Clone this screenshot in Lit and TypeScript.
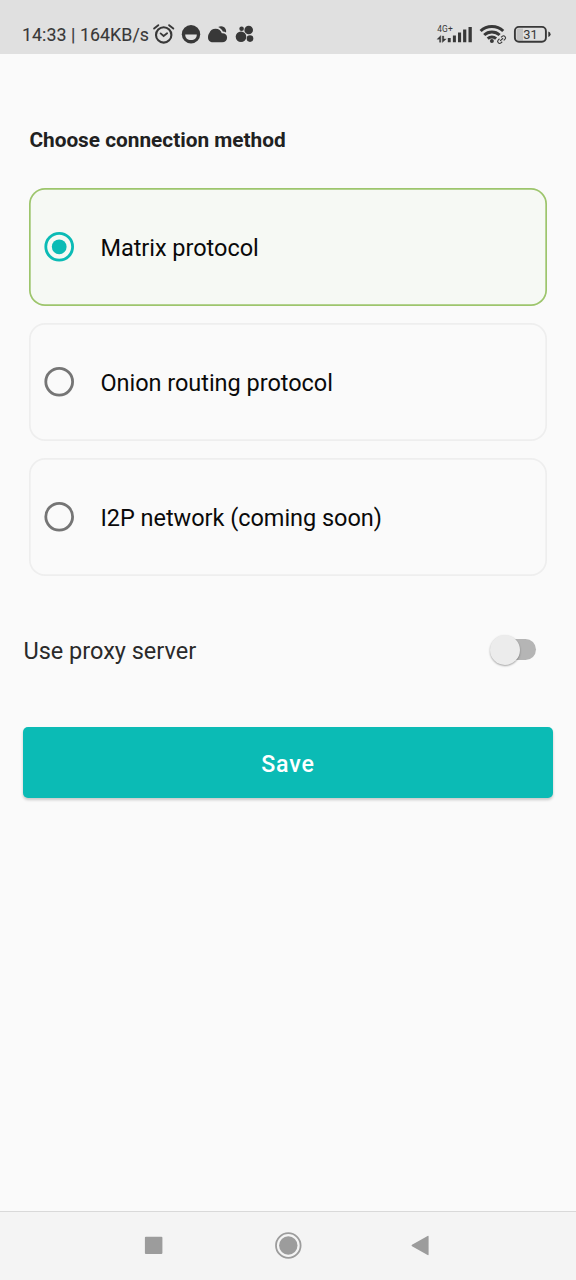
import { LitElement, html, css, svg } from "lit";
import { customElement, property, state } from "lit/decorators.js";
import { classMap } from "lit/directives/class-map.js";

@customElement("status-bar")
class StatusBar extends LitElement {
  static styles = css`
    :host { display: flex; box-sizing: border-box; height: 54px; padding: 15px 24px 0 22px; background: #e0e0e0; color: #383838; align-items: flex-start; }
    .time { font-size: 17.8px; line-height: 40px; letter-spacing: 0.06px; width: 128px; white-space: nowrap; font-weight: 400; -webkit-text-stroke: 0.1px #383838; }
    svg { display: block; flex: none; fill: #383838; }
    .spacer { flex: 1; }
    .small { font: 8.4px Roboto, sans-serif; letter-spacing: 0.1px; }
    .level { font: 400 12.8px Roboto, sans-serif; letter-spacing: 0; }
  `;
  render() {
    return html`
      <span class="time">14:33 | 164KB/s</span>
      <svg width="110" height="39" viewBox="150 15 110 39">
        <g fill="none" stroke="#383838" stroke-width="2.1" stroke-linecap="round">
          <circle cx="163.7" cy="34.9" r="7.7"></circle>
          <path d="M154.1 28.6l4.2-3.4M173.3 28.6l-4.2-3.4" stroke-width="1.9"></path>
          <path d="M160.6 33.4l3 2.6 3.5-2.7" stroke-width="1.8"></path>
        </g>
        <circle cx="191" cy="34.2" r="9.2"></circle>
        <path d="M185.2 34.4h11.6c0 3.6-2.3 5.6-5.8 5.6s-5.800-2-5.800-5.600z" fill="#e0e0e0"></path>
        <path d="M213 42.2c-3 0-5-2-5-4.800 0-2 .6-3.500 1.500-4.700 1-2.500 3-4 6-4 3.500 0 5.500 1.800 6.300 4.500 3.200-.3 5.300 1.400 5.300 4.200 0 3-2 4.800-5 4.800z"></path>
        <path d="M218.200 27c2.900-1.500 6.200-.6 7.400 1.900 .6 1.200 .6 2.400 .4 3.500-1-.7-2-.9-3.200-.9-.8-2-2.500-3.500-4.600-4.500z"></path>
        <circle cx="241" cy="36.700" r="5.300"></circle>
        <circle cx="248.700" cy="30" r="4.300"></circle>
        <circle cx="241.600" cy="28.800" r="2.300"></circle>
        <circle cx="250" cy="38.600" r="3.300"></circle>
      </svg>
      <span class="spacer"></span>
      <svg width="116" height="39" viewBox="436 15 116 39">
        <text class="small" x="437.300" y="31.700">4G+</text>
        <path d="M439.500 42.300v-3h-2.500l3.800-3.900v6.900zM442.300 36v6.600l4-3.700h-2.500v-2.900z" stroke="#383838" stroke-width=".3"></path>
        <path d="M447.800 38h2.900v4.300h-2.900zM452.900 35.500h3v6.800h-3zM458 32.500h3.100v9.800H458zM463.100 29.500h3.200v12.800h-3.200zM468.500 27h3.300v15.300h-3.300z"></path>
        <g fill="none" stroke="#383838" stroke-width="3">
          <path d="M480.600 31c6.200-6 16.400-6 22.600 0M484.200 35c4.300-4 11.100-4 15.400 0"></path>
          <path d="M487.700 38.700c2.500-2.200 5.900-2.200 8.400 0"></path>
        </g>
        <circle cx="491.900" cy="41" r="2"></circle>
        <rect x="-5.200" y="-3" width="10.400" height="6" rx="3" fill="#e0e0e0" transform="translate(501.600 39.600) rotate(-42)"></rect>
        <g fill="none" stroke="#383838" stroke-width="1.100" transform="translate(501.600 39.600) rotate(-42)">
          <path d="M1 -2H2.600a2 2 0 0 1 0 4H1M-1 2H-2.600a2 2 0 0 1 0-4H-1M-2 0H2"></path>
        </g>
        <path d="M518 28.500h5v12h-5q-1.500 0-1.500-2v-8q0-2 1.500-2z" fill="#c3c3c3"></path>
        <rect x="514.900" y="26.900" width="31" height="14.800" rx="4" fill="none" stroke="#383838" stroke-width="1.900"></rect>
        <path d="M548.300 31.500q2.300.7 2.300 2.800t-2.300 2.800z"></path>
        <text class="level" x="523.200" y="38.900">31</text>
      </svg>
    `;
  }
}

@customElement("method-option")
class MethodOption extends LitElement {
  @property() label = "";
  @property({ type: Boolean }) checked = false;
  static styles = css`
    :host { display: block; }
    .card { display: flex; align-items: center; box-sizing: border-box; height: 117.5px; padding-left: 14.5px; gap: 25.5px; border-radius: 16px; box-shadow: inset 0 0 0 1.7px #eeeeee; cursor: pointer; }
    .checked { background: #f6f9f4; box-shadow: inset 0 0 0 1.7px #9dc56c; }
    .radio { display: block; fill: none; stroke: #757575; stroke-width: 2.8; }
    .checked .radio { stroke: #0bbbb5; }
    .dot { fill: #0bbbb5; stroke: none; }
    .label { font-size: 23.5px; line-height: 30px; color: #0a0a0a; letter-spacing: -0.03px; padding-top: 2px; white-space: nowrap; }
  `;
  render() {
    return html`
      <div class=${classMap({ card: true, checked: this.checked })}>
        <svg class="radio" width="31" height="31" viewBox="0 0 31 31">
          <circle cx="15.2" cy="15.8" r="13.4"></circle>
          ${this.checked ? svg`<circle class="dot" cx="15.2" cy="15.8" r="7.4"></circle>` : null}
        </svg>
        <span class="label">${this.label}</span>
      </div>
    `;
  }
}

@customElement("nav-bar")
class NavBar extends LitElement {
  static styles = css`
    :host { display: flex; box-sizing: border-box; height: 69px; border-top: 1px solid #d9d9d9; background: #f4f4f4; justify-content: center; }
    svg { display: block; }
  `;
  render() {
    return html`
      <svg width="576" height="68" viewBox="0 1212 576 68" fill="#9c9c9c">
        <rect x="144.9" y="1236.7" width="17.5" height="17.3" rx="1"></rect>
        <circle cx="288.3" cy="1245.5" r="9.2"></circle>
        <circle cx="288.3" cy="1245.5" r="12.3" fill="none" stroke="#9c9c9c" stroke-width="1.8"></circle>
        <path d="M412 1244.700L427.600 1236q1-.5 1 .6v17.800q0 1.100-1 .6L412 1246.300q-1-.8 0-1.600z"></path>
      </svg>
    `;
  }
}

@customElement("app-root")
class AppRoot extends LitElement {
  @state() private selected = 0;
  private methods = ["Matrix protocol", "Onion routing protocol", "I2P network (coming soon)"];
  static styles = css`
    :host { display: flex; flex-direction: column; height: 1280px; background: #fafafa; font-family: Roboto, sans-serif; }
    .content { flex: 1; padding: 0 23.4px; }
    .title { margin: 70px 0 0 6px; font-size: 20.8px; line-height: 32px; font-weight: 700; color: #212121; white-space: nowrap; }
    .methods { display: flex; flex-direction: column; gap: 17.5px; margin: 32px 6px 0 6px; }
    .proxy { display: flex; justify-content: space-between; align-items: center; height: 60px; margin-top: 44px; padding-right: 15.6px; }
    .proxy-label { font-size: 23.5px; line-height: 30px; color: #2a2a2a; padding-top: 3px; }
    .track { width: 34px; height: 21px; border-radius: 11px; background: #b5b5b5; margin-right: 1px; display: flex; align-items: center; justify-content: flex-end; margin-bottom: 1px; }
    .thumb { flex: none; width: 30px; height: 30px; border-radius: 50%; background: #ececec; box-shadow: 0 1px 2px rgba(0, 0, 0, 0.35); margin: 1px 16.5px 0 0; }
    .save { display: block; width: 100%; height: 71px; margin-top: 47px; padding: 3px 0 0; border: 0; border-radius: 5px; background: #0bbbb5; box-shadow: 0 2px 3px rgba(0, 0, 0, 0.2); color: #fff; font: 500 23.2px Roboto, sans-serif; letter-spacing: 0.85px; }
  `;
  render() {
    return html`
      <status-bar></status-bar>
      <div class="content">
        <h1 class="title">Choose connection method</h1>
        <div class="methods">
          ${this.methods.map((m, i) => html`<method-option .label=${m} .checked=${i === this.selected} @click=${() => (this.selected = i)}></method-option>`)}
        </div>
        <div class="proxy">
          <span class="proxy-label">Use proxy server</span>
          <div class="track"><div class="thumb"></div></div>
        </div>
        <button class="save">Save</button>
      </div>
      <nav-bar></nav-bar>
    `;
  }
}
